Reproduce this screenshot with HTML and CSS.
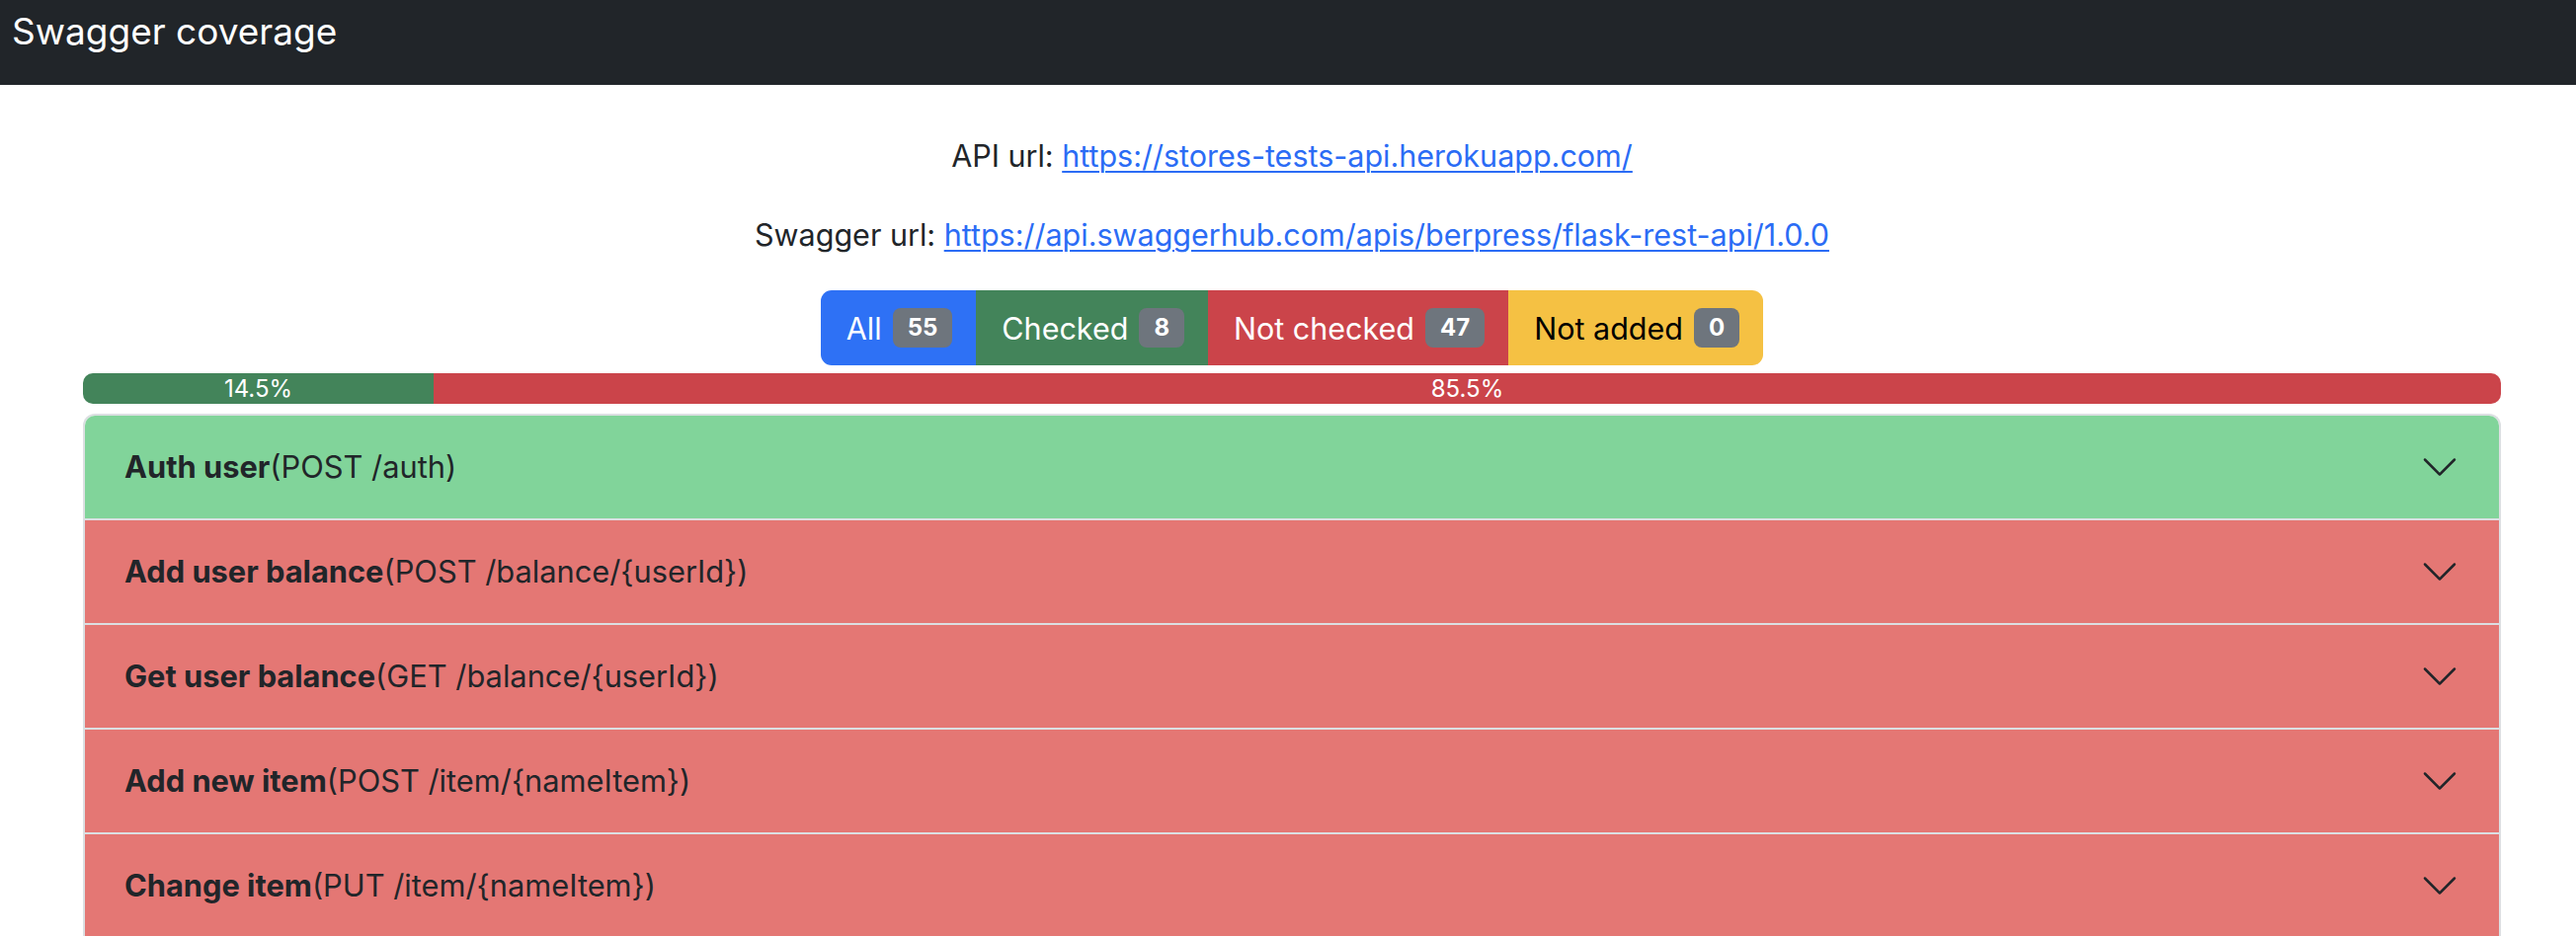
FILE: index.html
```html
<!DOCTYPE html>
<html lang="en">
<head>
<meta charset="utf-8">
<title>Swagger coverage</title>
<link rel="stylesheet" href="styles.css">
</head>
<body>
<nav class="navbar">
  <span class="brand">Swagger coverage</span>
</nav>
<main class="container">
  <p class="url url-first">API url: <a href="#">https://stores-tests-api.herokuapp.com/</a></p>
  <p class="url">Swagger url: <a href="#">https://api.swaggerhub.com/apis/berpress/flask-rest-api/1.0.0</a></p>
  <div class="filters">
    <div class="btn-group">
      <button class="btn btn-all">All<span class="badge">55</span></button>
      <button class="btn btn-checked">Checked<span class="badge">8</span></button>
      <button class="btn btn-not-checked">Not checked<span class="badge">47</span></button>
      <button class="btn btn-not-added">Not added<span class="badge">0</span></button>
    </div>
  </div>
  <div class="progress">
    <div class="bar bar-ok" style="width:14.5%">14.5%</div>
    <div class="bar bar-fail" style="width:85.5%">85.5%</div>
  </div>
  <div class="accordion">
    <div class="item item-ok">
      <div class="acc-btn"><span class="title"><b>Auth user</b>(POST /auth)</span><svg class="chev" viewBox="0 0 16 16"><path d="M1.646 4.646a.5.5 0 0 1 .708 0L8 10.293l5.646-5.647a.5.5 0 0 1 .708.708l-6 6a.5.5 0 0 1-.708 0l-6-6a.5.5 0 0 1 0-.708z"/></svg></div>
    </div>
    <div class="item item-fail">
      <div class="acc-btn"><span class="title"><b>Add user balance</b>(POST /balance/{userId})</span><svg class="chev" viewBox="0 0 16 16"><path d="M1.646 4.646a.5.5 0 0 1 .708 0L8 10.293l5.646-5.647a.5.5 0 0 1 .708.708l-6 6a.5.5 0 0 1-.708 0l-6-6a.5.5 0 0 1 0-.708z"/></svg></div>
    </div>
    <div class="item item-fail">
      <div class="acc-btn"><span class="title"><b>Get user balance</b>(GET /balance/{userId})</span><svg class="chev" viewBox="0 0 16 16"><path d="M1.646 4.646a.5.5 0 0 1 .708 0L8 10.293l5.646-5.647a.5.5 0 0 1 .708.708l-6 6a.5.5 0 0 1-.708 0l-6-6a.5.5 0 0 1 0-.708z"/></svg></div>
    </div>
    <div class="item item-fail">
      <div class="acc-btn"><span class="title"><b>Add new item</b>(POST /item/{nameItem})</span><svg class="chev" viewBox="0 0 16 16"><path d="M1.646 4.646a.5.5 0 0 1 .708 0L8 10.293l5.646-5.647a.5.5 0 0 1 .708.708l-6 6a.5.5 0 0 1-.708 0l-6-6a.5.5 0 0 1 0-.708z"/></svg></div>
    </div>
    <div class="item item-fail">
      <div class="acc-btn"><span class="title"><b>Change item</b>(PUT /item/{nameItem})</span><svg class="chev" viewBox="0 0 16 16"><path d="M1.646 4.646a.5.5 0 0 1 .708 0L8 10.293l5.646-5.647a.5.5 0 0 1 .708.708l-6 6a.5.5 0 0 1-.708 0l-6-6a.5.5 0 0 1 0-.708z"/></svg></div>
    </div>
  </div>
</main>
</body>
</html>
```
FILE: styles.css
```css
* { box-sizing: border-box; }
html, body { margin: 0; padding: 0; }
body {
  font-family: Inter, "Liberation Sans", Arial, sans-serif;
  font-size: 30.5px;
  color: #212529;
  background: #fff;
  overflow: hidden;
}
.navbar {
  background: #212529;
  height: 86px;
  padding: 8px 12px 0;
}
.brand {
  color: #fff;
  font-size: 37px;
  line-height: 48px;
  display: block;
}
.container {
  width: 2448px;
  margin-left: 84px;
}
.url {
  text-align: center;
  line-height: 48px;
  margin: 0 0 32px;
}
.url-first { margin-top: 48px; }
.url a { color: #2b6cf5; text-decoration: underline; text-underline-offset: 4px; text-decoration-thickness: 2px; }
.filters { display: flex; justify-content: center; }
.btn-group { display: flex; border-radius: 11px; overflow: hidden; }
.btn {
  font-family: inherit;
  font-size: 30.5px;
  height: 76px;
  padding: 0 24px 0 26px;
  border: 0;
  display: flex;
  align-items: center;
  color: #fff;
  cursor: pointer;
}
.btn-all { background: #2e71f5; }
.btn-checked { background: #43845a; }
.btn-not-checked { background: #cb444a; }
.btn-not-added { background: #f5c143; color: #000; }
.badge {
  background: #6e757d;
  color: #fff;
  font-weight: 700;
  font-size: 24px;
  line-height: 24px;
  padding: 8px 15px;
  border-radius: 8px;
  margin-left: 11px;
}
.progress {
  display: flex;
  height: 31px;
  margin-top: 8px;
  border-radius: 10px;
  overflow: hidden;
}
.bar {
  color: #fff;
  font-size: 24px;
  display: flex;
  align-items: center;
  justify-content: center;
}
.bar-ok { background: #43845a; }
.bar-fail { background: #cb444a; }
.accordion {
  margin-top: 10px;
  border: 2px solid #dcdfe2;
  border-bottom: 0;
  border-radius: 12px 12px 0 0;
  overflow: hidden;
}
.item + .item { border-top: 2px solid #dcdfe2; }
.item-ok { background: #81d49a; }
.item-fail { background: #e47774; }
.acc-btn {
  display: flex;
  align-items: center;
  padding: 32px 40px;
  line-height: 40px;
  font-size: 30.8px;
}
.title b { font-weight: 700; }
.chev {
  width: 40px;
  height: 40px;
  margin-left: auto;
  fill: #212529;
}
```
